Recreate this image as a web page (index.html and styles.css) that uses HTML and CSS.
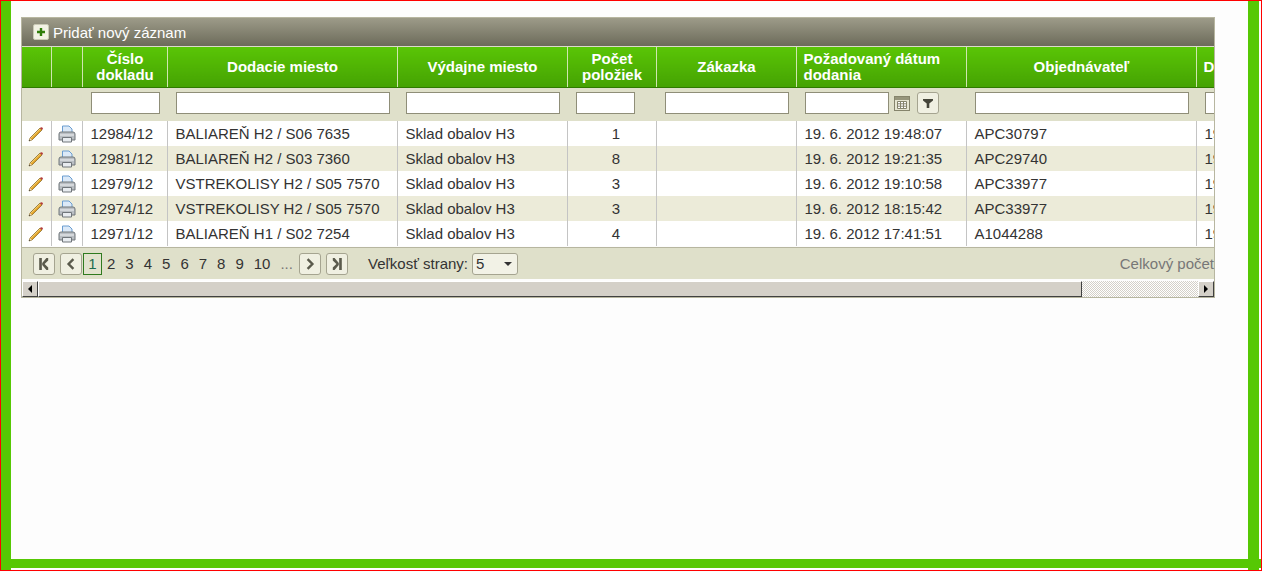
FILE: index.html
```html
<!DOCTYPE html>
<html lang="sk">
<head>
  <meta charset="UTF-8" />
  <meta name="viewport" content="width=device-width, initial-scale=1.0"/>
  <title>Objednávky</title>
  <link rel="stylesheet" href="styles.css">
</head>
<body>
  <svg class="sprites" width="0" height="0">
    <symbol id="ico-pencil" viewBox="0 0 16 16">
      <path d="M1 15l1-3L12 2l2 2L4 14z" fill="#e3a128" stroke="#6e5210" stroke-width=".6"/>
      <path d="M3 12.200L12.300 2.900" stroke="#f8dd84" stroke-width=".9" fill="none"/>
      <path d="M12 2q1-1.400 2.300-.5t.2 2.100L14 4z" fill="#b53a3a"/>
      <path d="M1 15l1-3 2 2z" fill="#f1dcb4"/>
      <path d="M1 15l.5-1.500 1 1z" fill="#222"/>
    </symbol>
    <symbol id="ico-print" viewBox="0 0 18 18">
      <path d="M4.500 1h6.500l3 3v6h-9.500z" fill="#dbe9f8" stroke="#6a9dd0"/>
      <path d="M1 9q0-2 2-2h12q2 0 2 2v6H1z" fill="#b9bec3" stroke="#70767b"/>
      <path d="M2 10h14" stroke="#f0f2f4"/>
      <path d="M4.500 12.500h9v4.500h-9z" fill="#e8ecf0" stroke="#70767b"/>
    </symbol>
  </svg>

  <div class="frame">
    <div class="grid">
      <div class="toolbar">
        <span class="add-btn"><svg width="10" height="10" viewBox="0 0 10 10"><path d="M5 1v8M1 5h8" stroke="#2f7d0a" stroke-width="2.400"/></svg></span>
        <span>Pridať nový záznam</span>
      </div>

      <div class="grid-view">
        <table class="data">
          <colgroup>
            <col class="c-edit"><col class="c-print"><col class="c-num"><col class="c-place"><col class="c-out">
            <col class="c-count"><col class="c-order"><col class="c-date"><col class="c-place"><col class="c-date">
          </colgroup>
          <thead>
            <tr class="head">
              <th></th>
              <th></th>
              <th>Číslo dokladu</th>
              <th>Dodacie miesto</th>
              <th>Výdajne miesto</th>
              <th>Počet položiek</th>
              <th>Zákazka</th>
              <th class="left">Požadovaný dátum dodania</th>
              <th>Objednávateľ</th>
              <th class="left">Dátum</th>
            </tr>
            <tr class="filters">
              <td></td>
              <td></td>
              <td><input class="f-num" type="text"></td>
              <td><input class="f-place" type="text"></td>
              <td><input class="f-out" type="text"></td>
              <td><input class="f-count" type="text"></td>
              <td><input class="f-order" type="text"></td>
              <td>
                <div class="date-filter">
                  <input class="f-date" type="text">
                  <svg class="cal" width="16" height="15" viewBox="0 0 16 15">
                    <rect x=".5" y=".5" width="15" height="14" fill="#e6e6d2" stroke="#85846c"/>
                    <rect x="1" y="1" width="14" height="3" fill="#96957c"/>
                    <path d="M3.500 5.500h9v7h-9zM3.500 7.800h9M3.500 10.200h9M6.500 5.500v7M9.500 5.500v7" fill="#fff" stroke="#85846c"/>
                  </svg>
                  <span class="filter-btn"><svg width="10" height="10" viewBox="0 0 10 10"><path d="M0 1h10v1.500L6.300 5.500V10H3.700V5.500L0 2.500z" fill="#45453a"/></svg></span>
                </div>
              </td>
              <td><input class="f-place" type="text"></td>
              <td><input class="f-place" type="text"></td>
            </tr>
          </thead>
          <tbody>
            <tr>
              <td class="ico"><svg width="16" height="16"><use href="#ico-pencil"/></svg></td>
              <td class="ico"><svg width="18" height="18"><use href="#ico-print"/></svg></td>
              <td>12984/12</td><td>BALIAREŇ H2 / S06 7635</td><td>Sklad obalov H3</td><td class="mid">1</td><td></td>
              <td>19. 6. 2012 19:48:07</td><td>APC30797</td><td>19. 6. 2012</td>
            </tr>
            <tr class="alt">
              <td class="ico"><svg width="16" height="16"><use href="#ico-pencil"/></svg></td>
              <td class="ico"><svg width="18" height="18"><use href="#ico-print"/></svg></td>
              <td>12981/12</td><td>BALIAREŇ H2 / S03 7360</td><td>Sklad obalov H3</td><td class="mid">8</td><td></td>
              <td>19. 6. 2012 19:21:35</td><td>APC29740</td><td>19. 6. 2012</td>
            </tr>
            <tr>
              <td class="ico"><svg width="16" height="16"><use href="#ico-pencil"/></svg></td>
              <td class="ico"><svg width="18" height="18"><use href="#ico-print"/></svg></td>
              <td>12979/12</td><td>VSTREKOLISY H2 / S05 7570</td><td>Sklad obalov H3</td><td class="mid">3</td><td></td>
              <td>19. 6. 2012 19:10:58</td><td>APC33977</td><td>19. 6. 2012</td>
            </tr>
            <tr class="alt">
              <td class="ico"><svg width="16" height="16"><use href="#ico-pencil"/></svg></td>
              <td class="ico"><svg width="18" height="18"><use href="#ico-print"/></svg></td>
              <td>12974/12</td><td>VSTREKOLISY H2 / S05 7570</td><td>Sklad obalov H3</td><td class="mid">3</td><td></td>
              <td>19. 6. 2012 18:15:42</td><td>APC33977</td><td>19. 6. 2012</td>
            </tr>
            <tr>
              <td class="ico"><svg width="16" height="16"><use href="#ico-pencil"/></svg></td>
              <td class="ico"><svg width="18" height="18"><use href="#ico-print"/></svg></td>
              <td>12971/12</td><td>BALIAREŇ H1 / S02 7254</td><td>Sklad obalov H3</td><td class="mid">4</td><td></td>
              <td>19. 6. 2012 17:41:51</td><td>A1044288</td><td>19. 6. 2012</td>
            </tr>
          </tbody>
        </table>
      </div>

      <div class="pager">
        <span class="pg-btn"><svg width="12" height="12" viewBox="0 0 10 10"><path d="M1 0h2.200v10H1zM8.500 0v2L5.500 5l3 3v2H7L3.500 5.800V4.200L7 0z" fill="#5a5a4c"/></svg></span>
        <span class="pg-btn prev"><svg width="12" height="12" viewBox="0 0 10 10"><path d="M7 1L3 5l4 4" fill="none" stroke="#5a5a4c" stroke-width="2"/></svg></span>
        <span class="pg-num current">1</span>
        <span class="pg-num">2</span>
        <span class="pg-num">3</span>
        <span class="pg-num">4</span>
        <span class="pg-num">5</span>
        <span class="pg-num">6</span>
        <span class="pg-num">7</span>
        <span class="pg-num">8</span>
        <span class="pg-num">9</span>
        <span class="pg-num">10</span>
        <span class="pg-num dots">...</span>
        <span class="pg-btn"><svg width="12" height="12" viewBox="0 0 10 10"><path d="M3 1l4 4-4 4" fill="none" stroke="#5a5a4c" stroke-width="2"/></svg></span>
        <span class="pg-btn next-last"><svg width="12" height="12" viewBox="0 0 10 10"><path d="M9 0H6.800v10H9zM1.500 0v2l3 3-3 3v2H3l3.500-4.200V4.200L3 0z" fill="#5a5a4c"/></svg></span>
        <span class="size-label">Veľkosť strany:</span>
        <span class="size-select">5<i class="caret"></i></span>
        <span class="total">Celkový počet</span>
      </div>

      <div class="scrollbar">
        <span class="sb-btn"><i class="arr-left"></i></span>
        <span class="sb-thumb"></span>
        <span class="sb-track"></span>
        <span class="sb-btn"><i class="arr-right"></i></span>
      </div>
    </div>
  </div>
</body>
</html>
```

FILE: styles.css
```css
:root {
  --frame-green: #56c804;
  --olive: #dfe0ca;
  --alt: #ecebd9;
  --line: #b7b6a0;
  --text: #333;
}

html, body {
  margin: 0;
  height: 100%;
}

body {
  font-family: "Liberation Sans", Arial, sans-serif;
  font-size: 15px;
  color: var(--text);
  background: #fdfdfd;
  overflow: hidden;
}

.sprites {
  display: block;
  height: 0;
}

.frame {
  box-sizing: border-box;
  height: 571px;
  border: 1px solid #f00;
  background:
    linear-gradient(var(--frame-green), var(--frame-green)) left top / 10px 100% no-repeat,
    linear-gradient(var(--frame-green), var(--frame-green)) right 2px top / 11px 100% no-repeat,
    linear-gradient(var(--frame-green), var(--frame-green)) left bottom 2px / 100% 9px no-repeat;
}

.grid {
  box-sizing: border-box;
  width: 1194px;
  margin: 16px 0 0 20px;
  border: 1px solid var(--line);
}

.toolbar {
  display: flex;
  align-items: center;
  gap: 4px;
  height: 28px;
  padding-left: 10px;
  background: linear-gradient(#9d9b89, #6c6b5a);
  border-bottom: 1px solid #dcdccb;
  color: #fff;
}

.add-btn {
  display: flex;
  align-items: center;
  justify-content: center;
  width: 14px;
  height: 14px;
  margin-left: 1px;
  border: 1px solid #c9c9b5;
  border-radius: 2px;
  background: #f2f2e4;
}

.grid-view {
  overflow: hidden;
}

.data {
  border-collapse: collapse;
  table-layout: fixed;
  width: 1344px;
}

.c-edit { width: 29px; }
.c-print { width: 31px; }
.c-num { width: 85px; }
.c-place { width: 230px; }
.c-out { width: 170px; }
.c-count { width: 89px; }
.c-order { width: 140px; }
.c-date { width: 170px; }

.head th {
  height: 40px;
  padding: 0 6px 0 7px;
  font-size: 15px;
  line-height: 16px;
  color: #fff;
  background: linear-gradient(#5ac506, #45a202);
  border-right: 1px solid #cfe6b0;
  border-bottom: 1px solid #2f7a00;
}

.head th.left {
  text-align: left;
}

.filters td {
  height: 29px;
  padding: 4px 7px 0 8px;
  vertical-align: top;
  background: var(--olive);
}

.filters input {
  display: block;
  box-sizing: border-box;
  height: 22px;
  margin: 0 0 0 1px;
  padding: 0;
  border: 1px solid #8f8e78;
  background: #fff;
}

.f-num { width: 69px; }
.f-place { width: 214px; }
.f-out { width: 154px; }
.f-count { width: 59px; }
.f-order { width: 124px; }
.f-date { width: 84px; }

.date-filter {
  display: flex;
  align-items: center;
}

.cal {
  margin-left: 5px;
}

.filter-btn {
  display: flex;
  align-items: center;
  justify-content: center;
  box-sizing: border-box;
  width: 22px;
  height: 22px;
  margin-left: 7px;
  border: 1px solid #a5a490;
  border-radius: 3px;
  background: #f0f0e2;
}

tbody td {
  height: 25px;
  padding: 0 7px 0 8px;
  background: #fff;
  border-right: 1px solid #c4c4c4;
  white-space: nowrap;
  overflow: hidden;
}

tbody tr.alt td {
  background: var(--alt);
}

tbody td.mid {
  padding-left: 16px;
  text-align: center;
}

tbody td.ico {
  padding: 0;
  text-align: center;
}

tbody td.ico svg {
  display: block;
  margin: 1px auto 0;
}

.pager {
  display: flex;
  align-items: center;
  height: 31px;
  padding-left: 11px;
  margin-top: 1px;
  background: var(--olive);
  border-top: 1px solid var(--line);
  white-space: nowrap;
}

.pg-btn {
  display: flex;
  align-items: center;
  justify-content: center;
  box-sizing: border-box;
  width: 22px;
  height: 22px;
  margin-right: 5px;
  border: 1px solid #a5a490;
  border-radius: 3px;
  background: #f0f0e2;
}

.pg-btn.prev {
  margin-right: 1px;
}

.pg-btn.next-last {
  margin: 0;
}

.pg-num {
  padding: 0 5px;
  line-height: 20px;
}

.pg-num.current {
  box-sizing: border-box;
  width: 19px;
  height: 22px;
  padding: 0;
  text-align: center;
  border: 1px solid #2f7a1e;
  background: #e2e3ce;
  color: #1e6b50;
}

.pg-num.dots {
  margin-right: 1px;
  color: #777;
}

.size-label {
  margin-left: 20px;
}

.size-select {
  display: flex;
  align-items: center;
  justify-content: space-between;
  box-sizing: border-box;
  width: 46px;
  height: 22px;
  margin-left: 4px;
  padding: 0 5px 0 3px;
  border: 1px solid #a5a490;
  border-radius: 3px;
  background: #f2f2e6;
}

.caret {
  width: 0;
  height: 0;
  border: 4px solid transparent;
  border-top-color: #333;
  border-bottom: 0;
}

.total {
  margin-left: auto;
  color: #777;
}

.scrollbar {
  display: flex;
  height: 16px;
  margin-top: 2px;
  background: #fff;
}

.sb-btn,
.sb-thumb {
  box-sizing: border-box;
  background: #d4d0c8;
  border: 1px solid;
  border-color: #fff #404040 #404040 #fff;
}

.sb-btn {
  display: flex;
  align-items: center;
  justify-content: center;
  width: 16px;
}

.sb-thumb {
  width: 1044px;
}

.sb-track {
  flex: 1;
  background: repeating-conic-gradient(#d4d0c8 0 25%, #fff 0 50%) 0 0 / 2px 2px;
}

.arr-left,
.arr-right {
  width: 0;
  height: 0;
  border: 4px solid transparent;
}

.arr-left {
  border-right-color: #000;
  border-left: 0;
}

.arr-right {
  border-left-color: #000;
  border-right: 0;
}
```
